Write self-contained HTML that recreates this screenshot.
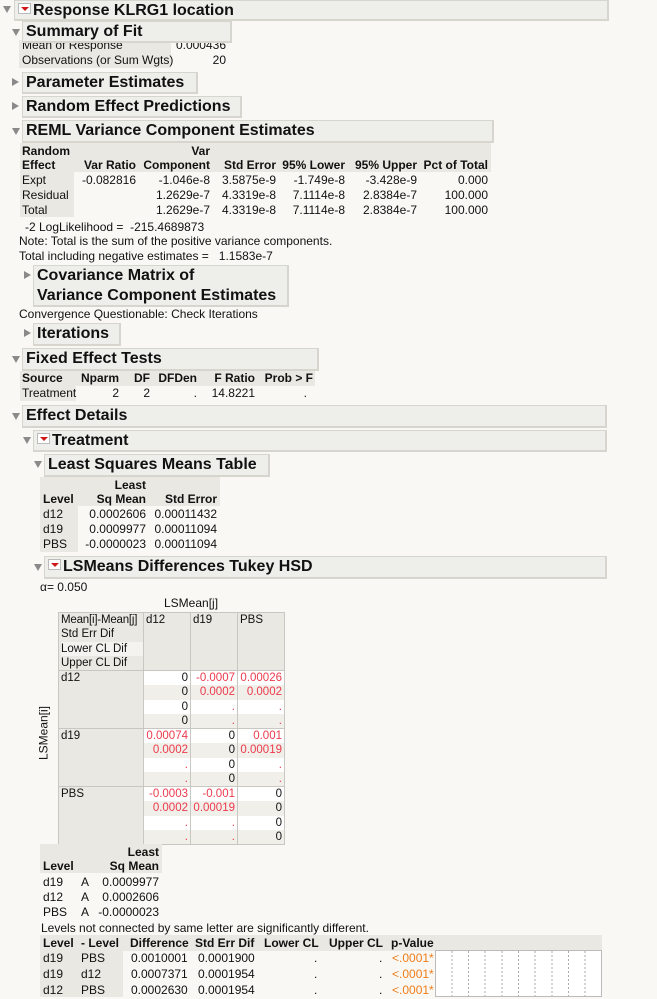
<!DOCTYPE html>
<html><head><meta charset="utf-8"><style>
*{margin:0;padding:0;box-sizing:border-box}
body{width:657px;height:999px;background:#f9f8f4;font-family:"Liberation Sans",Arial,sans-serif;font-size:12px;color:#111;position:relative;overflow:hidden}
.a{position:absolute;white-space:nowrap;line-height:15px}
.r{text-align:right}
.b{font-weight:bold}
.bar{position:absolute;background:#eeeeea;border:1px solid #d6d5ce;border-right-width:2px;border-bottom-width:2px;font-weight:bold;font-size:16px;line-height:19px;padding-left:3px;white-space:nowrap;z-index:2}
.g{position:absolute;background:#e9e8e2}
.td{position:absolute;width:0;height:0;border-left:4px solid transparent;border-right:4px solid transparent;border-top:7px solid #8a8a8a}
.tr{position:absolute;width:0;height:0;border-top:4px solid transparent;border-bottom:4px solid transparent;border-left:7px solid #8a8a8a}
.ri{display:inline-block;width:13px;height:11px;background:#fff;border:1px solid #bbb;vertical-align:1px;margin-right:2px;position:relative}
.ri:after{content:"";position:absolute;left:2px;top:3px;border-left:4px solid transparent;border-right:4px solid transparent;border-top:4px solid #d01818}
.red{color:#ec3a4c}
.or{color:#f07d1a}
table.m{position:absolute;left:58px;top:612px;border-collapse:collapse;table-layout:fixed;width:226px;font-size:11.5px;white-space:nowrap}
table.m td{border:1px solid #c8c7c1;vertical-align:top;padding:0;overflow:hidden}
table.m td.h{background:#e9e8e2}
.c div{height:14.25px;line-height:14px;text-align:right;padding-right:2px}
.c div:nth-child(2n){background:#f0efea}
.c{background:#fff}
</style></head><body>

<div class="td" style="left:3px;top:6px"></div>
<div class="bar" style="left:14px;top:0;width:595px;height:21px"><span class="ri"></span>Response KLRG1 location</div>

<div class="td" style="left:12px;top:29px"></div>
<div class="bar" style="left:22px;top:21px;width:210px;height:22px">Summary of Fit</div>
<div class="g" style="left:19px;top:40px;width:152px;height:28px"></div>
<div class="a" style="left:22px;top:38px">Mean of Response</div>
<div class="a r" style="left:150px;top:38px;width:76px">0.000436</div>
<div class="a" style="left:22px;top:53px">Observations (or Sum Wgts)</div>
<div class="a r" style="left:180px;top:53px;width:46px">20</div>

<div class="tr" style="left:12px;top:78px"></div>
<div class="bar" style="left:22px;top:72px;width:176px;height:22px">Parameter Estimates</div>
<div class="tr" style="left:12px;top:102px"></div>
<div class="bar" style="left:22px;top:96px;width:220px;height:22px">Random Effect Predictions</div>
<div class="td" style="left:12px;top:128px"></div>
<div class="bar" style="left:22px;top:120px;width:472px;height:23px">REML Variance Component Estimates</div>

<div class="g" style="left:20px;top:143px;width:471px;height:29px"></div>
<div class="g" style="left:20px;top:172px;width:54px;height:45px"></div>
<div class="a b" style="left:22px;top:144px">Random</div>
<div class="a b r" style="left:150px;top:144px;width:60px">Var</div>
<div class="a b" style="left:22px;top:158px">Effect</div>
<div class="a b r" style="left:76px;top:158px;width:60px">Var Ratio</div>
<div class="a b r" style="left:140px;top:158px;width:70px">Component</div>
<div class="a b r" style="left:210px;top:158px;width:66px">Std Error</div>
<div class="a b r" style="left:276px;top:158px;width:69px">95% Lower</div>
<div class="a b r" style="left:345px;top:158px;width:72px">95% Upper</div>
<div class="a b r" style="left:417px;top:158px;width:71px">Pct of Total</div>

<div class="a" style="left:22px;top:173px">Expt</div>
<div class="a r" style="left:66px;top:173px;width:70px">-0.082816</div>
<div class="a r" style="left:140px;top:173px;width:70px">-1.046e-8</div>
<div class="a r" style="left:210px;top:173px;width:66px">3.5875e-9</div>
<div class="a r" style="left:276px;top:173px;width:69px">-1.749e-8</div>
<div class="a r" style="left:345px;top:173px;width:72px">-3.428e-9</div>
<div class="a r" style="left:417px;top:173px;width:71px">0.000</div>
<div class="a" style="left:22px;top:188px">Residual</div>
<div class="a r" style="left:140px;top:188px;width:70px">1.2629e-7</div>
<div class="a r" style="left:210px;top:188px;width:66px">4.3319e-8</div>
<div class="a r" style="left:276px;top:188px;width:69px">7.1114e-8</div>
<div class="a r" style="left:345px;top:188px;width:72px">2.8384e-7</div>
<div class="a r" style="left:417px;top:188px;width:71px">100.000</div>
<div class="a" style="left:22px;top:203px">Total</div>
<div class="a r" style="left:140px;top:203px;width:70px">1.2629e-7</div>
<div class="a r" style="left:210px;top:203px;width:66px">4.3319e-8</div>
<div class="a r" style="left:276px;top:203px;width:69px">7.1114e-8</div>
<div class="a r" style="left:345px;top:203px;width:72px">2.8384e-7</div>
<div class="a r" style="left:417px;top:203px;width:71px">100.000</div>

<div class="a" style="left:25px;top:220px">-2 LogLikelihood = &nbsp;-215.4689873</div>
<div class="a" style="left:19px;top:234px">Note: Total is the sum of the positive variance components.</div>
<div class="a" style="left:19px;top:249px">Total including negative estimates = &nbsp;&nbsp;1.1583e-7</div>

<div class="tr" style="left:24px;top:271px"></div>
<div class="bar" style="left:33px;top:265px;width:256px;height:42px;line-height:20px">Covariance Matrix of<br>Variance Component Estimates</div>
<div class="a" style="left:19px;top:307px">Convergence Questionable: Check Iterations</div>
<div class="tr" style="left:24px;top:329px"></div>
<div class="bar" style="left:33px;top:323px;width:88px;height:23px">Iterations</div>

<div class="td" style="left:12px;top:356px"></div>
<div class="bar" style="left:22px;top:348px;width:297px;height:23px">Fixed Effect Tests</div>
<div class="g" style="left:20px;top:371px;width:295px;height:15px"></div>
<div class="g" style="left:20px;top:386px;width:56px;height:15px"></div>
<div class="a b" style="left:22px;top:371px">Source</div>
<div class="a b r" style="left:76px;top:371px;width:43px">Nparm</div>
<div class="a b r" style="left:120px;top:371px;width:30px">DF</div>
<div class="a b r" style="left:150px;top:371px;width:47px">DFDen</div>
<div class="a b r" style="left:197px;top:371px;width:58px">F Ratio</div>
<div class="a b r" style="left:255px;top:371px;width:58px">Prob &gt; F</div>
<div class="a" style="left:22px;top:386px">Treatment</div>
<div class="a r" style="left:76px;top:386px;width:43px">2</div>
<div class="a r" style="left:120px;top:386px;width:30px">2</div>
<div class="a r" style="left:150px;top:386px;width:47px">.</div>
<div class="a r" style="left:197px;top:386px;width:58px">14.8221</div>
<div class="a r" style="left:255px;top:386px;width:52px">.</div>

<div class="td" style="left:12px;top:413px"></div>
<div class="bar" style="left:22px;top:405px;width:585px;height:23px">Effect Details</div>
<div class="td" style="left:23px;top:437px"></div>
<div class="bar" style="left:33px;top:430px;width:574px;height:22px"><span class="ri"></span>Treatment</div>
<div class="td" style="left:34px;top:461px"></div>
<div class="bar" style="left:44px;top:454px;width:226px;height:23px">Least Squares Means Table</div>

<div class="g" style="left:40px;top:477px;width:180px;height:29px"></div>
<div class="g" style="left:40px;top:506px;width:38px;height:46px"></div>
<div class="a b r" style="left:86px;top:478px;width:60px">Least</div>
<div class="a b" style="left:43px;top:492px">Level</div>
<div class="a b r" style="left:80px;top:492px;width:66px">Sq Mean</div>
<div class="a b r" style="left:150px;top:492px;width:67px">Std Error</div>
<div class="a" style="left:43px;top:507px">d12</div>
<div class="a r" style="left:80px;top:507px;width:66px">0.0002606</div>
<div class="a r" style="left:150px;top:507px;width:67px">0.00011432</div>
<div class="a" style="left:43px;top:522px">d19</div>
<div class="a r" style="left:80px;top:522px;width:66px">0.0009977</div>
<div class="a r" style="left:150px;top:522px;width:67px">0.00011094</div>
<div class="a" style="left:43px;top:537px">PBS</div>
<div class="a r" style="left:80px;top:537px;width:66px">-0.0000023</div>
<div class="a r" style="left:150px;top:537px;width:67px">0.00011094</div>

<div class="td" style="left:34px;top:564px"></div>
<div class="bar" style="left:44px;top:556px;width:563px;height:23px"><span class="ri"></span>LSMeans Differences Tukey HSD</div>
<div class="a" style="left:40px;top:580px">α= 0.050</div>
<div class="a" style="left:164px;top:596px">LSMean[j]</div>
<div class="a" style="left:44px;top:733px;transform:translate(-50%,-50%) rotate(-90deg);transform-origin:center">LSMean[i]</div>

<table class="m">
<colgroup><col style="width:85px"><col style="width:47px"><col style="width:47px"><col style="width:47px"></colgroup>
<tr style="height:57px">
<td class="h"><div style="line-height:14.25px;padding-left:2px"><div style="letter-spacing:-0.2px">Mean[i]-Mean[j]</div><div>Std Err Dif</div><div style="background:#f4f3ef">Lower CL Dif</div><div>Upper CL Dif</div></div></td>
<td class="h" style="padding-left:2px;line-height:14px">d12</td>
<td class="h" style="padding-left:2px;line-height:14px">d19</td>
<td class="h" style="padding-left:2px;line-height:14px">PBS</td>
</tr>
<tr style="height:57px">
<td class="h" style="padding-left:2px;line-height:14px">d12</td>
<td class="c"><div>0</div><div>0</div><div>0</div><div>0</div></td>
<td class="c red"><div>-0.0007</div><div>0.0002</div><div>.</div><div>.</div></td>
<td class="c red"><div>0.00026</div><div>0.0002</div><div>.</div><div>.</div></td>
</tr>
<tr style="height:57px">
<td class="h" style="padding-left:2px;line-height:14px">d19</td>
<td class="c red"><div>0.00074</div><div>0.0002</div><div>.</div><div>.</div></td>
<td class="c"><div>0</div><div>0</div><div>0</div><div>0</div></td>
<td class="c red"><div>0.001</div><div>0.00019</div><div>.</div><div>.</div></td>
</tr>
<tr style="height:57px">
<td class="h" style="padding-left:2px;line-height:14px">PBS</td>
<td class="c red"><div>-0.0003</div><div>0.0002</div><div>.</div><div>.</div></td>
<td class="c red"><div>-0.001</div><div>0.00019</div><div>.</div><div>.</div></td>
<td class="c"><div>0</div><div>0</div><div>0</div><div>0</div></td>
</tr>
</table>

<div class="g" style="left:40px;top:844px;width:122px;height:29px"></div>
<div class="a b r" style="left:90px;top:845px;width:69px">Least</div>
<div class="a b" style="left:43px;top:859px">Level</div>
<div class="a b r" style="left:90px;top:859px;width:69px">Sq Mean</div>
<div class="a" style="left:43px;top:875px">d19</div><div class="a" style="left:81px;top:875px">A</div><div class="a r" style="left:90px;top:875px;width:69px">0.0009977</div>
<div class="a" style="left:43px;top:890px">d12</div><div class="a" style="left:81px;top:890px">A</div><div class="a r" style="left:90px;top:890px;width:69px">0.0002606</div>
<div class="a" style="left:43px;top:905px">PBS</div><div class="a" style="left:81px;top:905px">A</div><div class="a r" style="left:90px;top:905px;width:69px">-0.0000023</div>
<div class="a" style="left:41px;top:921px">Levels not connected by same letter are significantly different.</div>

<div class="g" style="left:40px;top:935px;width:562px;height:16px"></div>
<div class="g" style="left:40px;top:951px;width:83px;height:46px"></div>
<div class="a b" style="left:43px;top:936px">Level</div>
<div class="a b" style="left:81px;top:936px">- Level</div>
<div class="a b" style="left:130px;top:936px">Difference</div>
<div class="a b" style="left:195px;top:936px">Std Err Dif</div>
<div class="a b" style="left:264px;top:936px">Lower CL</div>
<div class="a b" style="left:329px;top:936px">Upper CL</div>
<div class="a b" style="left:391px;top:936px">p-Value</div>

<div class="a" style="left:43px;top:951px">d19</div><div class="a" style="left:81px;top:951px">PBS</div>
<div class="a" style="left:131px;top:951px">0.0010001</div><div class="a" style="left:198px;top:951px">0.0001900</div>
<div class="a" style="left:314px;top:951px">.</div><div class="a" style="left:379px;top:951px">.</div><div class="a or" style="left:392px;top:951px">&lt;.0001*</div>
<div class="a" style="left:43px;top:967px">d19</div><div class="a" style="left:81px;top:967px">d12</div>
<div class="a" style="left:131px;top:967px">0.0007371</div><div class="a" style="left:198px;top:967px">0.0001954</div>
<div class="a" style="left:314px;top:967px">.</div><div class="a" style="left:379px;top:967px">.</div><div class="a or" style="left:392px;top:967px">&lt;.0001*</div>
<div class="a" style="left:43px;top:983px">d12</div><div class="a" style="left:81px;top:983px">PBS</div>
<div class="a" style="left:131px;top:983px">0.0002630</div><div class="a" style="left:198px;top:983px">0.0001954</div>
<div class="a" style="left:314px;top:983px">.</div><div class="a" style="left:379px;top:983px">.</div><div class="a or" style="left:392px;top:983px">&lt;.0001*</div>

<svg style="position:absolute;left:435px;top:950px" width="168" height="48">
<rect x="0.5" y="0.5" width="166" height="46" fill="#fff" stroke="#bbb"/>
<g stroke="#aaa" stroke-dasharray="2,2">
<line x1="17" y1="1" x2="17" y2="46"/><line x1="33.5" y1="1" x2="33.5" y2="46"/><line x1="50" y1="1" x2="50" y2="46"/><line x1="67" y1="1" x2="67" y2="46"/><line x1="83.5" y1="1" x2="83.5" y2="46"/><line x1="100" y1="1" x2="100" y2="46"/><line x1="117" y1="1" x2="117" y2="46"/><line x1="133.5" y1="1" x2="133.5" y2="46"/><line x1="150" y1="1" x2="150" y2="46"/>
</g></svg>
</body></html>
